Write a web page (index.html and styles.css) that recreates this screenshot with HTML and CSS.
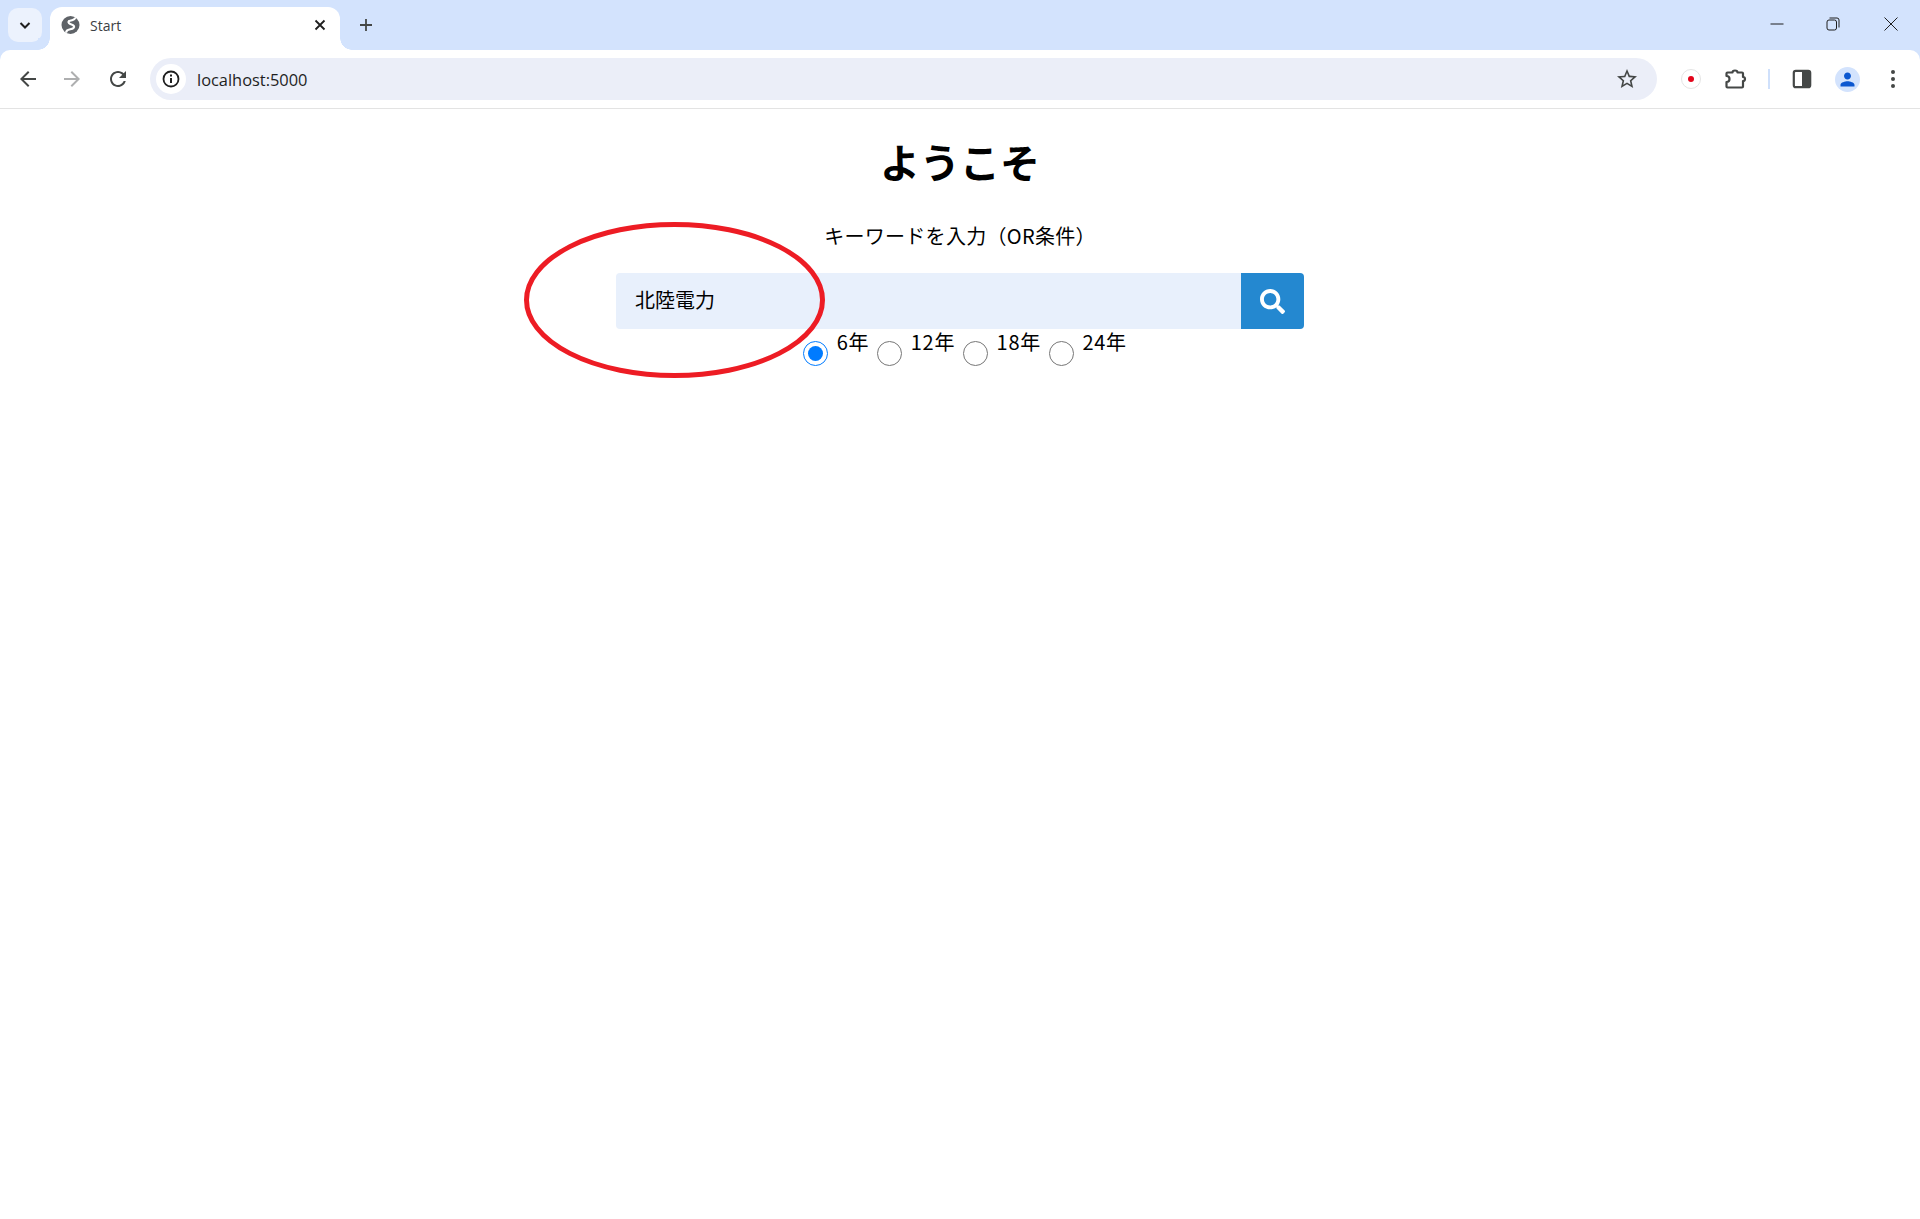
FILE: index.html
```html
<!DOCTYPE html>
<html lang="ja">
<head>
    <meta charset="UTF-8">
    <meta name="viewport" content="width=device-width, initial-scale=1.0">
    <title>Start</title>
    <link rel="stylesheet" href="styles.css">
</head>
<body>
    <div class="tabstrip">
        <div class="tab-list">
            <svg width="14" height="14" viewBox="0 0 14 14"><path d="M2.5 5l4.5 4.5L11.5 5" fill="none" stroke="#1f1f1f" stroke-width="2"/></svg>
        </div>
        <div class="tab">
            <svg class="tab-icon" width="22" height="22" viewBox="0 0 22 22"><circle cx="10.500" cy="11" r="9" fill="#5f6368"/><path d="M15 3.500c.5 2.500-4 3-6 3.500-1.500 1.500.5 3 2.500 3.500s3.500 2 2 3.500-5 1-6.500 2.500l-1 2" fill="none" stroke="#fff" stroke-width="2.200"/></svg>
            <span class="tab-title">Start</span>
            <svg class="tab-close" width="12" height="12" viewBox="0 0 12 12"><path d="M1.5 1.5l9 9M10.5 1.5l-9 9" stroke="#1f1f1f" stroke-width="1.8"/></svg>
        </div>
        <svg class="new-tab" width="14" height="14" viewBox="0 0 14 14"><path d="M7 1v12M1 7h12" stroke="#444746" stroke-width="1.8"/></svg>
        <div class="window-controls">
            <svg width="14" height="14" viewBox="0 0 14 14"><path d="M0.5 7h13" stroke="#1f1f1f" stroke-width="1"/></svg>
            <svg width="14" height="14" viewBox="0 0 14 14"><rect x="1" y="3" width="9.5" height="10" rx="2" fill="none" stroke="#1f1f1f"/><path d="M3.5 1h7.5a2 2 0 0 1 2 2v7.5" fill="none" stroke="#1f1f1f"/></svg>
            <svg class="window-close" width="14" height="14" viewBox="0 0 14 14"><path d="M0.5 0.5l13 13M13.5 0.5l-13 13" stroke="#1f1f1f" stroke-width="1"/></svg>
        </div>
    </div>

    <div class="toolbar">
        <div class="tool-btn">
            <svg width="24" height="24" viewBox="0 0 24 24"><path fill="#444746" d="M20 11H7.83l5.59-5.59L12 4l-8 8 8 8 1.41-1.41L7.83 13H20v-2z"/></svg>
        </div>
        <div class="tool-btn">
            <svg width="24" height="24" viewBox="0 0 24 24"><path fill="#aeafb0" d="M4 11h12.17l-5.59-5.59L12 4l8 8-8 8-1.41-1.41L16.17 13H4v-2z"/></svg>
        </div>
        <div class="tool-btn reload">
            <svg width="24" height="24" viewBox="0 0 24 24"><path fill="#444746" d="M17.65 6.35C16.2 4.9 14.21 4 12 4c-4.42 0-7.99 3.58-7.99 8s3.57 8 7.99 8c3.73 0 6.84-2.55 7.73-6h-2.08c-.82 2.33-3.04 4-5.65 4-3.31 0-6-2.69-6-6s2.69-6 6-6c1.66 0 3.14.69 4.22 1.78L13 11h7V4l-2.35 2.35z"/></svg>
        </div>
        <div class="omnibox">
            <div class="site-info">
                <svg width="18" height="18" viewBox="0 0 18 18"><circle cx="9" cy="9" r="7.5" fill="none" stroke="#1f1f1f" stroke-width="1.8"/><path d="M9 8v5M9 4.6v2" stroke="#1f1f1f" stroke-width="2"/></svg>
            </div>
            <span class="url">localhost:5000</span>
            <svg class="star" width="24" height="24" viewBox="0 0 24 24"><path fill="#444746" d="M22 9.24l-7.19-.62L12 2 9.19 8.63 2 9.24l5.46 4.73L5.82 21 12 17.27 18.18 21l-1.63-7.03L22 9.24zM12 15.4l-3.76 2.27 1-4.28-3.32-2.88 4.38-.38L12 6.1l1.71 4.04 4.38.38-3.32 2.88 1 4.28L12 15.4z"/></svg>
        </div>
        <div class="tool-btn ext-record">
            <span class="record-ring"><span class="record-dot"></span></span>
        </div>
        <div class="tool-btn ext-puzzle">
            <svg width="24" height="24" viewBox="0 0 24 24"><path fill="none" stroke="#444746" stroke-width="2.200" stroke-linejoin="round" d="M4.500 5.500h5a2.500 2 0 0 1 5 0H19a1 1 0 0 1 1 1V10a2 2 0 0 1 0 4v5.500a1 1 0 0 1-1 1H4.500a1 1 0 0 1-1-1V15a3 3 0 0 0 0-6V6.500a1 1 0 0 1 1-1z"/></svg>
        </div>
        <span class="tool-sep"></span>
        <div class="tool-btn side-panel">
            <svg width="20" height="20" viewBox="0 0 20 20"><rect x="1.800" y="1.800" width="16.400" height="16.400" rx="2" fill="none" stroke="#444746" stroke-width="2.200"/><rect x="10" y="2" width="8" height="16" fill="#444746"/></svg>
        </div>
        <div class="tool-btn avatar-btn">
            <span class="avatar">
                <svg width="24" height="24" viewBox="0 0 24 24"><path fill="#0b57d0" d="M12 12c2.210 0 4-1.790 4-4s-1.790-4-4-4-4 1.790-4 4 1.790 4 4 4zm0 2c-2.670 0-8 1.340-8 4v2h16v-2c0-2.660-5.330-4-8-4z"/></svg>
            </span>
        </div>
        <div class="tool-btn menu-btn">
            <span class="menu-dots"><i></i><i></i><i></i></span>
        </div>
    </div>

    <div class="page">
        <h1>ようこそ</h1>
        <p class="search-label">キーワードを入力（OR条件）</p>
        <form class="search-form">
            <input class="search-input" type="text" value="北陸電力">
            <button class="search-btn" type="button">
                <svg width="25" height="25" viewBox="0 0 512 512"><path fill="#fff" d="M505 442.700L405.300 343c-4.500-4.500-10.600-7-17-7H372c27.600-35.300 44-79.700 44-128C416 93.100 322.900 0 208 0S0 93.100 0 208s93.100 208 208 208c48.300 0 92.700-16.400 128-44v16.300c0 6.400 2.500 12.500 7 17l99.700 99.700c9.400 9.400 24.600 9.400 33.900 0l28.300-28.300c9.400-9.400 9.400-24.600.1-34zM208 336c-70.700 0-128-57.200-128-128 0-70.700 57.200-128 128-128 70.700 0 128 57.200 128 128 0 70.700-57.200 128-128 128z"/></svg>
            </button>
        </form>
        <div class="period-row">
            <label class="period"><input type="radio" name="period" checked><span>6年</span></label>
            <label class="period"><input type="radio" name="period"><span>12年</span></label>
            <label class="period"><input type="radio" name="period"><span>18年</span></label>
            <label class="period"><input type="radio" name="period"><span>24年</span></label>
        </div>
    </div>

    <svg class="annotation" width="310" height="164" viewBox="0 0 310 164"><ellipse cx="154.500" cy="82" rx="148" ry="75.500" fill="none" stroke="#ed1c24" stroke-width="5"/></svg>
</body>
</html>
```

FILE: styles.css
```css
body {
    margin: 0;
    background-color: #fff;
    color: #000;
    font-family: "Noto Sans CJK JP", "Liberation Sans", sans-serif;
}
svg {
    display: block;
}

/* browser chrome */
.tabstrip {
    display: flex;
    align-items: flex-start;
    height: 50px;
    background-color: #d3e3fd;
    position: relative;
}
.tab-list {
    width: 34px;
    height: 34px;
    margin: 8px 0 0 8px;
    border-radius: 10px;
    background-color: #ecf2fd;
    display: flex;
    align-items: center;
    justify-content: center;
}
.tab {
    display: flex;
    align-items: center;
    width: 290px;
    height: 43px;
    margin: 7px 0 0 8px;
    padding: 0 0 7px 10px;
    box-sizing: border-box;
    background-color: #fff;
    border-radius: 12px 12px 0 0;
    position: relative;
}
.tab::before,
.tab::after {
    content: "";
    position: absolute;
    bottom: 0;
    width: 12px;
    height: 12px;
}
.tab::before {
    left: -12px;
    background: radial-gradient(circle at 0 0, #d3e3fd 11.500px, #fff 12px);
}
.tab::after {
    right: -12px;
    background: radial-gradient(circle at 100% 0, #d3e3fd 11.500px, #fff 12px);
}
.tab-title {
    margin-left: 8px;
    font-family: "Open Sans", sans-serif;
    font-size: 14px;
    color: #3c4043;
}
.tab-close {
    margin-left: auto;
    margin-right: 14px;
}
.new-tab {
    margin: 18px 0 0 19px;
}
.window-controls {
    display: flex;
    gap: 42px;
    margin: 17px 22px 0 auto;
}
.window-close {
    margin-left: 2px;
}
.toolbar {
    display: flex;
    align-items: center;
    height: 58px;
    padding: 0 9px 0 10px;
    background-color: #fff;
    border-bottom: 1px solid #e3e3e3;
    border-radius: 10px 10px 0 0;
    box-shadow: 0 -10px 0 0 #d3e3fd;
}
.tool-btn {
    width: 36px;
    height: 36px;
    display: flex;
    align-items: center;
    justify-content: center;
    flex-shrink: 0;
    margin-right: 8px;
}
.reload {
    margin-left: 2px;
    margin-right: 14px;
}
.omnibox {
    display: flex;
    align-items: center;
    flex: 1;
    height: 42px;
    padding: 0 18px 0 6px;
    margin-right: 16px;
    background-color: #ebeef8;
    border-radius: 21px;
}
.site-info {
    width: 30px;
    height: 30px;
    border-radius: 50%;
    background-color: #fff;
    display: flex;
    align-items: center;
    justify-content: center;
}
.url {
    margin-left: 11px;
    font-family: "Open Sans", sans-serif;
    font-size: 16.400px;
    color: #1f1f1f;
}
.star {
    margin-left: auto;
}
.ext-record {
    margin-right: 8px;
}
.record-ring {
    width: 18px;
    height: 18px;
    border: 1px solid #e4e4e4;
    border-radius: 50%;
    display: flex;
    align-items: center;
    justify-content: center;
}
.record-dot {
    width: 6px;
    height: 6px;
    border-radius: 50%;
    background-color: #e3051b;
}
.ext-puzzle {
    margin-right: 15px;
}
.tool-sep {
    width: 2px;
    height: 20px;
    background-color: #cfe0fb;
    flex-shrink: 0;
    margin-right: 14px;
}
.side-panel {
    margin-right: 9px;
}
.avatar-btn {
    margin-right: 10px;
}
.avatar {
    width: 25px;
    height: 25px;
    border-radius: 50%;
    background-color: #d3e3fd;
    display: flex;
    align-items: center;
    justify-content: center;
}
.avatar svg {
    width: 21px;
    height: 21px;
}
.menu-btn {
    margin-right: 0;
}
.menu-dots {
    display: flex;
    flex-direction: column;
    gap: 3px;
}
.menu-dots i {
    width: 4px;
    height: 4px;
    border-radius: 50%;
    background-color: #444746;
}

/* page */
.page {
    display: flex;
    flex-direction: column;
    align-items: center;
    padding-top: 23px;
}
h1 {
    margin: 0;
    font-size: 40px;
    line-height: 58px;
    font-weight: bold;
}
.search-label {
    margin: 31px 0 0;
    font-size: 20px;
    line-height: 30px;
    letter-spacing: 0.3px;
}
.search-form {
    display: flex;
    width: 688px;
    height: 56px;
    margin-top: 22px;
}
.search-input {
    flex: 1;
    min-width: 0;
    padding: 0 19px 4px;
    border: 0;
    border-radius: 4px 0 0 4px;
    background-color: #e8f0fc;
    color: #000;
    font-family: inherit;
    font-size: 20px;
}
.search-btn {
    width: 63px;
    padding: 0;
    border: 0;
    border-radius: 0 4px 4px 0;
    background-color: #2488d0;
    display: flex;
    align-items: center;
    justify-content: center;
}
.period-row {
    display: flex;
    gap: 8px;
    height: 46px;
    padding-left: 10px;
}
.period {
    display: flex;
    align-items: flex-start;
    gap: 8.500px;
    font-size: 20px;
    line-height: 25px;
    letter-spacing: 0.7px;
}
.period input {
    width: 25px;
    height: 25px;
    margin: 12px 0 0;
    accent-color: #007bff;
}

.annotation {
    position: absolute;
    left: 520px;
    top: 218px;
}
```
